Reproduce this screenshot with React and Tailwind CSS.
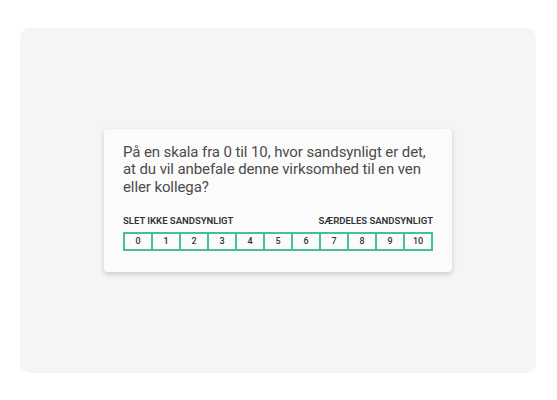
export default function App() {
  const nums = [0, 1, 2, 3, 4, 5, 6, 7, 8, 9, 10];
  return (
    <div className="w-[557px] h-[400px] bg-white pt-[28px] px-[20px] font-['Roboto',sans-serif]">
      <div className="w-[516px] h-[345px] bg-[#f5f5f5] rounded-[10px] flex items-center justify-center">
        <div className="w-[348px] bg-[#fbfbfb] rounded-[4px] shadow-[0_2px_5px_rgba(0,0,0,0.18)] pt-[15px] pb-[21px] px-[19px]">
          <p className="text-[15px] leading-[17.5px] text-[#4b4b4b] tracking-[-0.1px]">
            På en skala fra 0 til 10, hvor sandsynligt er det, at du vil anbefale denne virksomhed til en ven eller kollega?
          </p>
          <div className="mt-[19px] flex justify-between text-[9.5px] leading-[12px] font-semibold text-[#333] uppercase">
            <span>Slet ikke sandsynligt</span>
            <span>Særdeles sandsynligt</span>
          </div>
          <div className="mt-[5px] flex border-2 border-[#44c294]">
            {nums.map((n) => (
              <div
                key={n}
                className="flex-1 h-[15px] flex items-center justify-center text-[9px] font-medium text-[#333] border-l-2 border-[#44c294] first:border-l-0"
              >
                {n}
              </div>
            ))}
          </div>
        </div>
      </div>
    </div>
  );
}
